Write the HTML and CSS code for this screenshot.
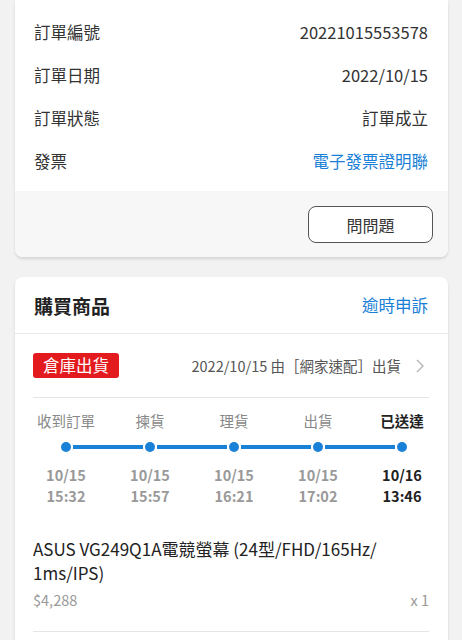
FILE: index.html
```html
<!DOCTYPE html>
<html lang="zh-TW">
<head>
    <meta charset="UTF-8">
    <meta name="viewport" content="width=device-width, initial-scale=1.0">
    <title>訂單明細</title>
    <link rel="stylesheet" href="styles.css">
</head>
<body>
    <div class="card card-top">
        <div class="info-list">
            <div class="info-row">
                <span class="info-label">訂單編號</span>
                <span class="info-value">20221015553578</span>
            </div>
            <div class="info-row">
                <span class="info-label">訂單日期</span>
                <span class="info-value">2022/10/15</span>
            </div>
            <div class="info-row">
                <span class="info-label">訂單狀態</span>
                <span class="info-value">訂單成立</span>
            </div>
            <div class="info-row">
                <span class="info-label">發票</span>
                <a class="info-value link" href="#">電子發票證明聯</a>
            </div>
        </div>
        <div class="card-footer">
            <button class="ask-btn">問問題</button>
        </div>
    </div>

    <div class="card">
        <div class="card-header">
            <h2>購買商品</h2>
            <a class="link" href="#">逾時申訴</a>
        </div>

        <div class="shipment">
            <div class="ship-row">
                <span class="badge">倉庫出貨</span>
                <span class="ship-info">2022/10/15 由［網家速配］出貨</span>
                <svg class="chevron" width="10" height="14" viewBox="0 0 10 14">
                    <path d="M2 1l6 6-6 6" fill="none" stroke="#b5b5b5" stroke-width="1.4"/>
                </svg>
            </div>

            <div class="steps">
                <div class="step-labels">
                    <span>收到訂單</span>
                    <span>揀貨</span>
                    <span>理貨</span>
                    <span>出貨</span>
                    <span class="done">已送達</span>
                </div>
                <div class="track">
                    <i class="dot"></i><i class="bar"></i>
                    <i class="dot"></i><i class="bar"></i>
                    <i class="dot"></i><i class="bar"></i>
                    <i class="dot"></i><i class="bar"></i>
                    <i class="dot"></i>
                </div>
                <div class="step-times">
                    <span>10/15<br>15:32</span>
                    <span>10/15<br>15:57</span>
                    <span>10/15<br>16:21</span>
                    <span>10/15<br>17:02</span>
                    <span class="done">10/16<br>13:46</span>
                </div>
            </div>

            <div class="product">
                <div class="product-name">ASUS VG249Q1A電競螢幕 (24型/FHD/165Hz/ 1ms/IPS)</div>
                <div class="product-meta">
                    <span>$4,288</span>
                    <span>x 1</span>
                </div>
            </div>
        </div>
    </div>
</body>
</html>
```

FILE: styles.css
```css
body {
    margin: 0;
    padding: 0 14px 20px 15px;
    font-family: "Noto Sans CJK TC", "Noto Sans", sans-serif;
    color: #333;
    background-color: #f2f2f2;
}

a {
    text-decoration: none;
}

.link {
    color: #1a7fd6;
}

.card {
    background-color: white;
    border-radius: 8px;
    box-shadow: 0 2px 3px rgba(0,0,0,0.12);
    margin-bottom: 20px;
    overflow: hidden;
}

.card-top {
    border-radius: 0 0 8px 8px;
}

/* order info */
.info-list {
    padding: 10px 20px 9px 19px;
}

.info-row {
    display: flex;
    justify-content: space-between;
    align-items: center;
    height: 43px;
    font-size: 16.5px;
}

.info-label {
    color: #333;
}

.info-value {
    color: #333;
}

.info-value.link {
    color: #1a7fd6;
}

.card-footer {
    display: flex;
    justify-content: flex-end;
    padding: 15px 15px 14px;
    background-color: #f7f7f7;
}

.ask-btn {
    width: 125px;
    height: 37px;
    border: 1px solid #555;
    border-radius: 8px;
    background: white;
    font-family: inherit;
    font-size: 16px;
    color: #333;
}

/* purchased items */
.card-header {
    display: flex;
    justify-content: space-between;
    align-items: center;
    height: 56px;
    padding: 0 20px 0 19px;
    border-bottom: 1px solid #e8e8e8;
}

.card-header h2 {
    margin: 0;
    font-size: 19px;
    font-weight: bold;
    color: #222;
}

.card-header .link {
    font-size: 16.5px;
}

.shipment {
    padding: 19px 19px 40px 18px;
}

.ship-row {
    display: flex;
    align-items: center;
    padding-bottom: 19px;
    border-bottom: 1px solid #e5e5e5;
}

.badge {
    background-color: #e31b1f;
    color: white;
    font-size: 16.5px;
    line-height: 25px;
    padding: 0 10px;
    border-radius: 3px;
}

.ship-info {
    flex: 1;
    text-align: right;
    font-size: 14.5px;
    color: #555;
    margin-right: 14px;
}

.chevron {
    margin-right: 4px;
}

.steps {
    margin-left: -9px;
    width: 420px;
    padding-top: 13px;
}

.step-labels,
.step-times {
    display: grid;
    grid-template-columns: repeat(5, 84px);
    text-align: center;
    font-size: 14.5px;
    color: #888;
}

.step-labels {
    line-height: 20px;
}

.step-times {
    line-height: 21px;
    font-weight: 600;
    color: #999;
    padding-top: 12px;
}

.step-labels .done,
.step-times .done {
    color: #222;
    font-weight: bold;
}

.track {
    display: flex;
    align-items: center;
    margin: 11px 37px 0;
}

.dot {
    width: 10px;
    height: 10px;
    border-radius: 50%;
    background-color: #1a81d8;
}

.bar {
    flex: 1;
    height: 4px;
    margin: 0 2px;
    background-color: #1a81d8;
}

.product {
    padding: 31px 0 21px;
    border-bottom: 1px solid #e5e5e5;
}

.product-name {
    font-size: 17px;
    line-height: 24px;
    color: #222;
    padding-right: 30px;
}

.product-meta {
    display: flex;
    justify-content: space-between;
    margin-top: 5px;
    font-size: 14.5px;
    line-height: 20px;
    color: #999;
}
```
